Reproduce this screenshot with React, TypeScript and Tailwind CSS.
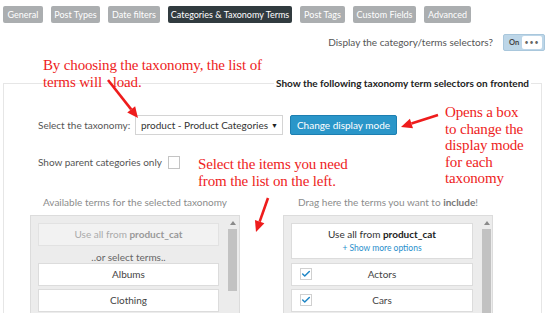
import { Check } from 'lucide-react'

const tabs = [
  { label: 'General', w: 'w-[40px]' },
  { label: 'Post Types', w: 'w-[49px]' },
  { label: 'Date filters', w: 'w-[52px]' },
  { label: 'Categories & Taxonomy Terms', w: 'w-[124px]', active: true },
  { label: 'Post Tags', w: 'w-[45px]' },
  { label: 'Custom Fields', w: 'w-[63px]' },
  { label: 'Advanced', w: 'w-[47px]' },
]

function Arrow({ x1, y1, x2, y2 }: { x1: number; y1: number; x2: number; y2: number }) {
  const dx = x2 - x1
  const dy = y2 - y1
  const len = Math.hypot(dx, dy)
  const ux = dx / len
  const uy = dy / len
  const bx = x2 - ux * 11
  const by = y2 - uy * 11
  const px = -uy * 5
  const py = ux * 5
  return (
    <g>
      <line x1={x1} y1={y1} x2={bx} y2={by} stroke="#ee1c1c" strokeWidth={2.6} />
      <polygon points={`${x2},${y2} ${bx + px},${by + py} ${bx - px},${by - py}`} fill="#ee1c1c" />
    </g>
  )
}

function Scrollbar({ thumb }: { thumb: string }) {
  return (
    <div className="flex w-[9px] flex-col items-center pt-[5px]">
      <div className="h-0 w-0 border-x-[3px] border-b-[4px] border-x-transparent border-b-[#8a8a8a]" />
      <div className={`mt-[4px] w-[9px] bg-[#c2c2c2] ${thumb}`} />
    </div>
  )
}

function Item({ children, check }: { children: React.ReactNode; check?: boolean }) {
  return (
    <div className="relative flex h-[23px] items-center justify-center border border-[#dcdcdc] bg-white text-[10px] text-[#444]">
      {check && (
        <span className="absolute left-[8px] top-[4px] flex h-[12px] w-[12px] items-center justify-center border border-[#d0d0d0] bg-white">
          <Check className="h-[10px] w-[10px] text-[#1f86c6]" strokeWidth={3.5} />
        </span>
      )}
      {children}
    </div>
  )
}

const red = "pointer-events-none absolute font-['Liberation_Serif',serif] text-[15px] tracking-[-0.15px] text-[#ee1c1c]"

export default function App() {
  return (
    <div className="relative h-[313px] w-[550px] overflow-hidden bg-white font-['Lato','Open_Sans',sans-serif] text-[#555]">
      {/* tabs */}
      <div className="flex gap-[8px] pl-[3px] pt-[6px]">
        {tabs.map((t) => (
          <div
            key={t.label}
            className={`flex h-[17px] items-center justify-center rounded-[2px] text-[9px] text-white ${t.w} ${t.active ? 'bg-[#313b3f]' : 'bg-[#abaeb0]'}`}
          >
            {t.label}
          </div>
        ))}
      </div>

      {/* toggle */}
      <div className="mt-[11px] flex items-center justify-end gap-[10px] pr-[5px]">
        <span className="text-[10px] text-[#555]">Display the category/terms selectors?</span>
        <div className="flex h-[17px] w-[42px] items-center justify-between rounded-[2px] border border-[#a9c7dc] bg-[#bdd6e8] pl-[5px] pr-[2px]">
          <span className="text-[7.5px] font-bold text-[#444]">On</span>
          <span className="flex h-[13px] w-[20px] items-center justify-center rounded-[2px] bg-white text-[7px] leading-none tracking-[1px] text-[#666]">
            •••
          </span>
        </div>
      </div>

      {/* panel */}
      <fieldset className="ml-[3px] mt-[26px] w-[539px] border border-[#e6e6e6]">
        <legend className="ml-auto mr-[10px] px-[2px] text-[10px] font-bold leading-[12px] text-[#222]">
          Show the following taxonomy term selectors on frontend
        </legend>
        <div className="px-[26px]">
          <div className="mt-[26px] flex items-center pl-[8px]">
            <span className="w-[97px] text-[10px] text-[#555]">Select the taxonomy:</span>
            <div className="flex h-[20px] w-[148px] items-center justify-between border border-[#d4d4d4] bg-white pl-[5px] pr-[4px] text-[10px] text-[#333]">
              <span>product - Product Categories</span>
              <span className="text-[7px] text-[#222]">▼</span>
            </div>
            <div className="ml-[7px] flex h-[20px] w-[107px] items-center justify-center rounded-[2px] border border-[#1d7fb1] bg-[#2a96c9] text-[10px] text-white">
              Change display mode
            </div>
          </div>

          <div className="mt-[20px] flex items-center gap-[6px] pl-[8px]">
            <span className="text-[10px] text-[#555]">Show parent categories only</span>
            <span className="h-[13px] w-[12px] border border-[#c4c4c4] bg-white" />
          </div>

          <div className="mt-[26px] flex gap-[43px]">
            <div className="flex w-[210px] flex-col items-center">
              <span className="text-[10px] leading-[12px] text-[#8c8c8c]">Available terms for the selected taxonomy</span>
              <div className="mt-[7px] flex h-[110px] w-[210px] border border-[#dcdcdc] bg-[#ececec] pl-[7px] pr-[2px]">
                <div className="flex w-[181px] flex-col pt-[7px]">
                  <div className="flex h-[23px] items-center justify-center border border-[#e2e2e2] bg-[#f2f2f2] text-[10px] text-[#aaa]">
                    <span>
                      Use all from <b className="text-[#999]">product_cat</b>
                    </span>
                  </div>
                  <div className="pt-[5px] text-center text-[10px] leading-[12px] text-[#666]">..or select terms..</div>
                  <div className="flex flex-col gap-[3px]">
                    <Item>Albums</Item>
                    <Item>Clothing</Item>
                  </div>
                </div>
                <div className="ml-auto">
                  <Scrollbar thumb="h-[62px]" />
                </div>
              </div>
            </div>

            <div className="flex w-[210px] flex-col items-center">
              <span className="text-[10px] leading-[12px] text-[#8c8c8c]">
                Drag here the terms you want to <b className="text-[#777]">include</b>!
              </span>
              <div className="mt-[7px] flex h-[110px] w-[210px] border border-[#dcdcdc] bg-[#ececec] pl-[7px] pr-[1px]">
                <div className="flex w-[182px] flex-col gap-[4px] pt-[7px]">
                  <div className="flex h-[36px] flex-col items-center justify-center border border-[#dcdcdc] bg-white">
                    <span className="text-[10px] text-[#333]">
                      Use all from <b className="text-[#222]">product_cat</b>
                    </span>
                    <span className="text-[8.5px] text-[#2a8fcc]">+ Show more options</span>
                  </div>
                  <div className="flex flex-col gap-[3px]">
                    <Item check>Actors</Item>
                    <Item check>Cars</Item>
                  </div>
                </div>
                <div className="ml-auto">
                  <Scrollbar thumb="h-[120px]" />
                </div>
              </div>
            </div>
          </div>
        </div>
      </fieldset>

      {/* annotations */}
      <div className={`${red} left-[43px] top-[57px] leading-[17px]`}>
        By choosing the taxonomy, the list of
        <br />
        terms will &nbsp;&nbsp;load.
      </div>
      <div className={`${red} left-[445px] top-[104px] leading-[16.5px]`}>
        Opens a box
        <br />
        to change the
        <br />
        display mode
        <br />
        for each
        <br />
        taxonomy
      </div>
      <div className={`${red} left-[198px] top-[156px] leading-[16.5px]`}>
        Select the items you need
        <br />
        from the list on the left.
      </div>
      <svg className="pointer-events-none absolute left-0 top-0" width={550} height={313}>
        <Arrow x1={108} y1={80} x2={138} y2={118} />
        <Arrow x1={438} y1={115} x2={401} y2={127} />
        <Arrow x1={268} y1={198} x2={256} y2={232} />
      </svg>
    </div>
  )
}
